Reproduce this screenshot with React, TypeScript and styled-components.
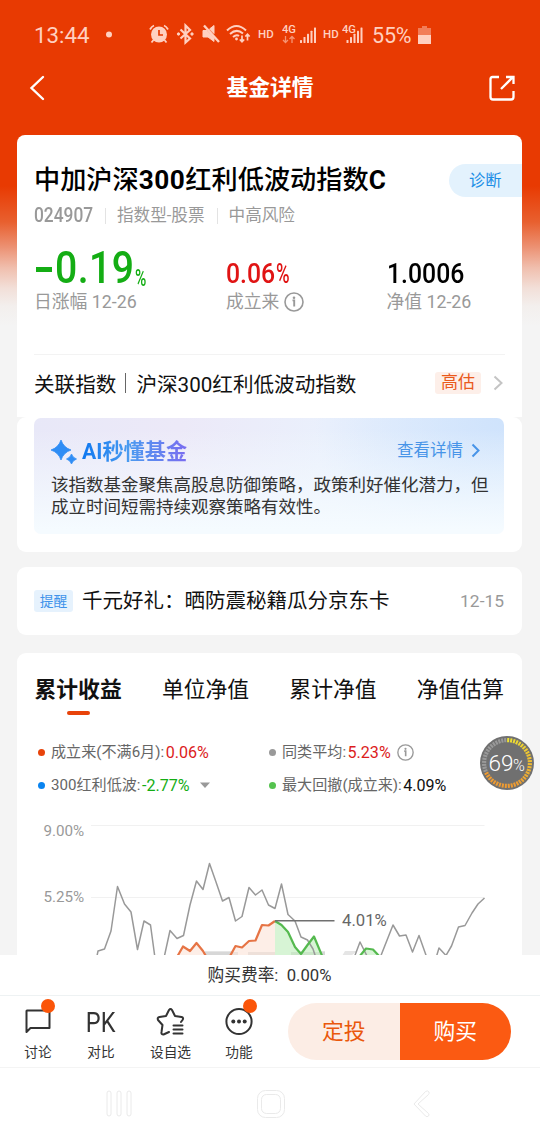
import React from "react";
import styled, { createGlobalStyle } from "styled-components";

const Global = createGlobalStyle`
  * { box-sizing: border-box; }
  body {
    margin: 0;
    background: #f4f4f4;
    font-family: Roboto, "Noto Sans CJK SC", sans-serif;
    color: #111;
  }
  svg { display: block; flex: none; }
`;

const Page = styled.div`
  position: relative;
  width: 540px;
  height: 1140px;
  overflow: hidden;
  display: flex;
  flex-direction: column;
  background: linear-gradient(#e83a02 0, #e83a02 186px, #e8602f 222px, #ec8f70 246px, #f0bfae 268px, #f2dfd8 288px, #f3efed 306px, #f4f4f4 326px);
`;

const StatusBar = styled.div`
  flex: none;
  display: flex;
  align-items: center;
  height: 70px;
  padding-left: 34px;
  color: #ffd0c0;
`;

const Clock = styled.span`
  width: 69px;
  font-size: 22.3px;
`;

const Battery = styled.span`
  width: 46px;
  font-size: 21.5px;
  letter-spacing: -0.2px;
  margin-left: 7px;
`;

const Hd = styled.span<{ $left: number }>`
  width: 16px;
  margin-left: ${(p) => p.$left}px;
  font-size: 11.5px;
  font-weight: 500;
  line-height: 14px;
  padding-bottom: 2px;
`;

const Spaced = styled.span<{ $left: number }>`
  margin-left: ${(p) => p.$left}px;
`;

const Header = styled.header`
  flex: none;
  display: flex;
  align-items: center;
  justify-content: space-between;
  height: 34px;
  padding: 1px 25px 0 29px;
`;

const HeaderTitle = styled.h1`
  margin: 0;
  padding: 1px 0 0 6px;
  font-size: 21.8px;
  line-height: 34px;
  font-weight: 700;
  color: #fff;
`;

const Content = styled.main`
  flex: 1;
  min-height: 0;
  overflow: hidden;
  padding: 31px 18px 0 17px;
`;

const Card = styled.section<{ $gap?: number }>`
  margin-top: ${(p) => p.$gap ?? 0}px;
  border-radius: 9px;
  background: #fff;
`;

const SummaryCard = styled(Card)`
  height: 282px;
  padding: 29px 17px 0;
  border-radius: 8px 8px 0 0;
`;

const TitleRow = styled.div`
  display: flex;
  align-items: center;
  justify-content: space-between;
  height: 33px;
  margin-right: -17px;
`;

const FundName = styled.h2`
  margin: 0;
  font-size: 26.2px;
  line-height: 33px;
  font-weight: 500;
  color: #000;
  white-space: nowrap;
  b { font-weight: 700; letter-spacing: 0.5px; }
`;

const Diagnose = styled.span`
  width: 73px;
  height: 33px;
  padding-left: 20px;
  border-radius: 17px 0 0 17px;
  background: #e3f2fd;
  color: #1c8ee6;
  font-size: 16.3px;
  line-height: 34px;
`;

const Meta = styled.div`
  display: flex;
  align-items: center;
  height: 24px;
  margin-top: 7px;
  font-size: 16.6px;
  line-height: 24px;
  color: #999;
`;

const MetaItem = styled.span`
  padding-left: 12px;
  margin-right: 12px;
  position: relative;
  line-height: 24px;
  &::before {
    content: "";
    position: absolute;
    left: 0;
    top: 4px;
    height: 16px;
    border-left: 1px solid #e3e3e3;
  }
`;

/* Condensed numerals: a fixed box with the digits squeezed horizontally */
const Din = styled.span<{ $size: number; $w: number; $x?: number; $weight?: number; $space?: number }>`
  display: block;
  width: ${(p) => p.$w}px;
  font-size: ${(p) => p.$size}px;
  line-height: 1;
  font-weight: ${(p) => p.$weight ?? 500};
  letter-spacing: ${(p) => p.$space ?? 0}px;
  white-space: nowrap;
  transform: scaleX(${(p) => p.$x ?? 0.885});
  transform-origin: left center;
`;

const Minus = styled.i`
  align-self: center;
  width: 16px;
  height: 5px;
  margin: 2px 3px 0 2px;
  background: currentColor;
`;

const Stats = styled.div`
  display: grid;
  grid-template-columns: 192px 160.5px 1fr;
  margin-top: 18px;
`;

const StatValue = styled.div<{ $color: string; $lift?: number }>`
  display: flex;
  align-items: flex-end;
  height: 44px;
  padding-bottom: ${(p) => p.$lift ?? 0}px;
  color: ${(p) => p.$color};
`;

const StatLabel = styled.div`
  display: flex;
  align-items: center;
  gap: 5px;
  height: 24px;
  font-size: 17.8px;
  line-height: 24px;
  color: #999;
`;

const Related = styled.div`
  display: flex;
  align-items: center;
  height: 56px;
  margin-top: 40px;
  border-top: 1px solid #f3f3f3;
  font-size: 20.6px;
  color: #111;
`;

const Bar = styled.i`
  width: 1px;
  height: 20px;
  margin: 0 10px 0 9px;
  background: #666;
`;

const Tag = styled.span<{ $tone: "orange" | "blue" }>`
  flex: none;
  width: ${(p) => (p.$tone === "orange" ? 46 : 39)}px;
  height: 22px;
  border-radius: 3px;
  text-align: center;
  line-height: ${(p) => (p.$tone === "orange" ? 21 : 22)}px;
  font-size: ${(p) => (p.$tone === "orange" ? 17 : 13.8)}px;
  color: ${(p) => (p.$tone === "orange" ? "#ea5a1c" : "#3f93ea")};
  background: ${(p) => (p.$tone === "orange" ? "#fdefe9" : "#e6f2fd")};
`;

const Push = styled.div`
  display: flex;
  align-items: center;
  margin-left: auto;
  margin-right: 2px;
  gap: 12px;
  padding-top: 1px;
`;

const AiCard = styled(Card)`
  height: 135px;
  padding: 1px 18px 0 17px;
`;

const AiPanel = styled.div`
  height: 116px;
  padding: 20px 12px 0 17px;
  border-radius: 7px;
  background:
    linear-gradient(to bottom, rgba(246, 252, 255, 0) 10%, #f5fbff 96%),
    radial-gradient(circle at 100% 0, #cfe3fc 0, rgba(220, 235, 253, 0) 190px),
    linear-gradient(100deg, #e8e8f8 0, #ece9f8 30%, #eaf0fc 60%, #e0edfd 100%);
`;

const AiHead = styled.div`
  display: flex;
  align-items: center;
  height: 26px;
`;

const AiTitle = styled.strong`
  margin-left: 5px;
  padding-top: 1px;
  font-size: 21.2px;
  line-height: 28px;
  font-weight: 700;
  background: linear-gradient(90deg, #0f78f0, #4b9bf0 45%, #7a6cf0);
  background-clip: text;
  -webkit-background-clip: text;
  color: transparent;
`;

const More = styled.span`
  display: flex;
  align-items: center;
  gap: 8px;
  margin: -1px 12px 0 auto;
  font-size: 16.5px;
  line-height: 24px;
  color: #4794e8;
`;

const AiText = styled.p`
  margin: 11px 0 0;
  width: 442px;
  font-size: 17.5px;
  line-height: 21.5px;
  color: #333;
`;

const Notice = styled(Card)`
  display: flex;
  align-items: center;
  height: 68px;
  padding: 0 18px 0 17px;
`;

const NoticeText = styled.span`
  margin-left: 9px;
  font-size: 20.5px;
  line-height: 30px;
`;

const NoticeDate = styled.span`
  margin-left: auto;
  font-size: 17.4px;
  color: #999;
`;

const ChartCard = styled(Card)`
  height: 400px;
`;

const Tabs = styled.div`
  display: flex;
  justify-content: space-between;
  padding: 21px 18px 0 17.5px;
`;

const Tab = styled.span<{ $active?: boolean }>`
  height: 43px;
  font-size: 21.8px;
  line-height: 31px;
  font-weight: ${(p) => (p.$active ? 700 : 400)};
  color: #111;
  &::after {
    content: "";
    display: ${(p) => (p.$active ? "block" : "none")};
    width: 23px;
    height: 4px;
    margin: 6px auto 0;
    border-radius: 2px;
    background: #e8430a;
  }
`;

const Legend = styled.div`
  display: grid;
  grid-template-columns: 231px 1fr;
  grid-auto-rows: 33px;
  height: 85px;
  padding: 19px 0 0 20px;
`;

const LegendItem = styled.div<{ $dot: string }>`
  display: flex;
  align-items: center;
  font-size: 15.1px;
  line-height: 33px;
  color: #666;
  &::before {
    content: "";
    width: 7px;
    height: 7px;
    margin: 0 6px 1px 1px;
    border-radius: 50%;
    background: ${(p) => p.$dot};
  }
`;

const LegendValue = styled.span<{ $color: string }>`
  margin: 0 6px 0 1.5px;
  font-size: 16.1px;
  color: ${(p) => p.$color};
`;

const Dock = styled.footer`
  flex: none;
  height: 185px;
  background: #fff;
`;

const Fee = styled.div`
  height: 41px;
  border-bottom: 1px solid #eef2f3;
  padding-right: 1px;
  text-align: center;
  font-size: 16.7px;
  line-height: 41px;
  color: #333;
`;

const Actions = styled.div`
  display: flex;
  height: 72px;
  padding: 7px 0 0 3px;
  border-bottom: 1px solid #f4f4f4;
`;

const Action = styled.div<{ $w: number }>`
  position: relative;
  width: ${(p) => p.$w}px;
  display: flex;
  flex-direction: column;
  align-items: center;
  font-size: 13.7px;
  line-height: 20px;
  color: #333;
  svg, b { margin-top: 3px; margin-bottom: 5px; }
`;

const Pk = styled.b`
  height: 31px;
  font-size: 28px;
  line-height: 33px;
  font-weight: 400;
  transform: scaleX(0.84);
`;

const Badge = styled.i<{ $left: number }>`
  position: absolute;
  top: -4px;
  left: ${(p) => p.$left}px;
  width: 14px;
  height: 14px;
  border-radius: 50%;
  background: #fb5509;
`;

const Trade = styled.div`
  display: flex;
  width: 223px;
  height: 57px;
  margin-left: 22px;
  border-radius: 29px;
  overflow: hidden;
`;

const TradeButton = styled.button<{ $primary?: boolean }>`
  flex: 1;
  border: 0;
  padding: 0;
  font: inherit;
  font-size: 21.8px;
  line-height: 57px;
  color: ${(p) => (p.$primary ? "#fff" : "#ea580c")};
  background: ${(p) => (p.$primary ? "#fb5a12" : "#fcede5")};
`;

const SystemNav = styled.div`
  display: flex;
  align-items: center;
  justify-content: space-between;
  height: 72px;
  padding: 0 110px 0 106px;
  svg:nth-child(2) { margin-right: 4px; }
`;

const Float = styled.div`
  position: absolute;
  left: 480px;
  top: 736px;
`;

const Info = ({ size, color = "#999" }: { size: number; color?: string }) => (
  <svg width={size} height={size} viewBox="0 0 20 20" fill="none" stroke={color}>
    <circle cx="10" cy="10" r="9" strokeWidth="1.6" />
    <path d="M8.5 8.4H10.2V14.4" strokeWidth="1.9" />
    <circle cx="10" cy="5.7" r="1.3" fill={color} stroke="none" />
  </svg>
);

const Chevron = ({ color, w = 8, h = 14 }: { color: string; w?: number; h?: number }) => (
  <svg width={w + 2} height={h + 2} viewBox={`-1 -1 ${w + 2} ${h + 2}`} fill="none" stroke={color} strokeWidth="2">
    <path d={`M0.5 0.5L${w - 0.5} ${h / 2}L0.5 ${h - 0.5}`} />
  </svg>
);

const Network = ({ arrows }: { arrows?: boolean }) => (
  <svg width={arrows ? 36 : 23} height="28" viewBox={`0 -3 ${arrows ? 36 : 23} 28`} fill="currentColor">
    <text x="0" y="9" fontSize="11.5" fontWeight="500" textLength="14" lengthAdjust="spacingAndGlyphs">4G</text>
    {arrows && (
      <g fill="none" stroke="currentColor" strokeWidth="1.3" opacity="0.6">
        <path d="M3.5 12V18.5M1 16L3.5 18.5L6 16M10 19V12.5M7.5 15L10 12.5L12.5 15" />
      </g>
    )}
    {[0, 1, 2, 3, 4].map((i) => (
      <rect key={i} x={(arrows ? 18 : 4.5) + i * 3.5} y={16 - i * 3.1} width="2" height={3 + i * 3.1} rx="0.5" />
    ))}
  </svg>
);

const StatusIcons = () => (
  <svg width="102" height="24" fill="none" stroke="currentColor">
    <g transform="translate(0 0.5)">
      <circle cx="10" cy="11" r="8" fill="currentColor" stroke="none" />
      <path d="M1 6Q2.5 3 5 2M15 2Q17.5 3 19 6M4.5 16.5L2.5 19M15.5 16.5L17.5 19" strokeWidth="1.8" />
      <path d="M10 6.5V11.5H14" stroke="#e83a02" strokeWidth="1.7" />
    </g>
    <g transform="translate(27 0.5)">
      <path d="M4.5 6L14 15L9.5 19V2L14 6.5L4.5 15" strokeWidth="2.2" />
      <circle cx="2.5" cy="10.5" r="1.2" fill="currentColor" />
      <circle cx="16" cy="10.5" r="1.2" fill="currentColor" />
    </g>
    <g transform="translate(53 0.5)">
      <path d="M1 7H5L12 14V18L6 13.5H1ZM7.5 5.5L12 2V10Z" fill="currentColor" stroke="currentColor" strokeWidth="1" />
      <path d="M2 2L17 18.5" strokeWidth="2.4" />
    </g>
    <g transform="translate(77 0.5)" strokeWidth="2">
      <path d="M1 7Q10.5 -2 20 7M4 10.5Q10.5 4.5 17 10M7 13.5Q10.5 10.5 13 12.5" />
      <circle cx="10.5" cy="15.5" r="1.4" fill="currentColor" stroke="none" />
      <path d="M16 12V18M13.8 16L16 18.2L18.2 16M21.5 17V11M19.3 13L21.5 10.8L23.7 13" strokeWidth="1.7" />
    </g>
  </svg>
);

const average1 = "97,146 98,141 104.5,139 111,121 117.5,76.5 124.5,94 131,102 137.5,139.5 144,111 150.5,115 155,148";
const average2 =
  "164,148 170,120.5 177,128.5 183.5,125.5 190,95 196.5,71 203,79.5 209.5,53.5 216,72 222.5,91 229,87.5 235.5,111 242,106.5 249,77.5 255.5,85 262,80 268.5,95 275,98.5 281.5,74 288,104.5 295,111 301,127 307.5,130 313,139 316,148";
const average3a = "354,148 360,132 368,148";
const average3b = "380,148 393,115 399.5,126 406,125 412.5,142 419,125.5 427,148";
const average3c = "436,148 439,138 446,145.5 451.5,136 458.5,117 465,115.5 472,103 478,94 484.5,88";

const Chart = () => (
  <svg width="505" height="153" viewBox="17 802 505 153">
    <g transform="translate(0 810)" fill="none" strokeLinejoin="round">
      <path d="M91 15.5H484.5M91 87.5H484.5" stroke="#f1f1f1" />
      <g fill="#999" fontSize="15.2">
        <text x="43.5" y="26.3">9.00%</text>
        <text x="43.5" y="92">5.25%</text>
      </g>
      <path d="M205 141H238V145H205ZM248 141H285V145H248ZM291 141H325V146H291ZM345 141H357L351 146H342Z" fill="#e5e5e5" />
      <path d="M177 146L183 136.5L190 141L196.5 133L203 141L206 146ZM230 146L235.5 136L242 137.5L249 131L255.5 130.5L262 115L268.5 115.5L275 111V146Z" fill="#fdeee7" />
      <path d="M275 111L281.5 115L288 122L295 137L301 144L307.5 135L314 126.5L322 146H275ZM360 146L366 139L373 140L379 146Z" fill="#d7f4d5" />
      <path d="M238 142H205V145H238ZM248 142H275V145H248ZM291 142H325V145H291Z" fill="#000" opacity="0.06" />
      <g stroke="#999" strokeWidth="1.5">
        <polyline points={average1} />
        <polyline points={average2} />
        <polyline points={average3a} />
        <polyline points={average3b} />
        <polyline points={average3c} />
      </g>
      <g strokeWidth="2.2">
        <path d="M177 147L183 136.5L190 141L196.5 133L203 141L207 148M229 148L235.5 136L242 137.5L249 131L255.5 130.5L262 115L268.5 115.5L275 111" stroke="#e67445" />
        <path d="M275 111L281.5 115L288 122L295 137L301 144L307.5 135L314 126.5L323 148M359 147L366 138.5L373 139.5L380 147" stroke="#55b94f" />
      </g>
      <path d="M275 110.8H334.5" stroke="#707070" strokeWidth="1.6" />
      <text x="342" y="116" fill="#666" fontSize="16.7">4.01%</text>
    </g>
  </svg>
);

const Gauge = () => (
  <svg width="54" height="54" viewBox="-27 -27 54 54">
    <circle r="27" fill="#707070" />
    {Array.from({ length: 48 }, (_, i) => {
      const lit = i < 33;
      const green = Math.max(155, 226 - i * 3.4);
      return (
        <path key={i} d="M0 -25V-20.8" transform={`rotate(${i * 7.5 + 3})`} stroke={lit ? `rgb(238,${green},50)` : "#999"} strokeWidth="2" />
      );
    })}
    <text x="-18.5" y="8" fill="#fff" fontFamily="Roboto" fontWeight="300" fontSize="22.5">
      69<tspan fontSize="16" dx="-0.5">%</tspan>
    </text>
  </svg>
);

export default function App() {
  return (
    <>
      <Global />
      <Page>
        <StatusBar>
          <Clock>13:44</Clock>
          <svg width="12" height="8"><circle cx="6" cy="3.5" r="3" fill="currentColor" /></svg>
          <Spaced $left={34}><StatusIcons /></Spaced>
          <Hd $left={7}>HD</Hd>
          <Spaced $left={8}><Network arrows /></Spaced>
          <Hd $left={5}>HD</Hd>
          <Spaced $left={3}><Network /></Spaced>
          <Battery>55%</Battery>
          <svg width="13" height="18" fill="currentColor">
            <path d="M4 0H9V2H13V9H0V2H4Z" opacity="0.45" />
            <path d="M0 9H13V18H0Z" />
          </svg>
        </StatusBar>
        <Header>
          <svg width="16" height="26" fill="none" stroke="#fff" strokeWidth="2.4" strokeLinecap="round">
            <path d="M14 2L2.5 13L14 24" />
          </svg>
          <HeaderTitle>基金详情</HeaderTitle>
          <svg width="26" height="26" fill="none" stroke="#fff" strokeWidth="2.3">
            <path d="M10 2H3.5Q1.5 2 1.5 4V22Q1.5 24.5 4 24.5H22Q24.5 24.5 24.5 22V16M12 14L23.5 2.5M17 2H24.5V9" />
          </svg>
        </Header>
        <Content>
          <SummaryCard>
            <TitleRow>
              <FundName>中加沪深<b>300</b>红利低波动指数<b>C</b></FundName>
              <Diagnose>诊断</Diagnose>
            </TitleRow>
            <Meta>
              <Din $size={19.3} $w={71} $x={0.9} $weight={500}>024907</Din>
              <MetaItem>指数型-股票</MetaItem>
              <MetaItem>中高风险</MetaItem>
            </Meta>
            <Stats>
              <div>
                <StatValue $color="#14ad14">
                  <Minus />
                  <Din $size={45} $w={80} $x={0.87} $space={0.5}>0.19</Din>
                  <Din $size={24} $w={12} $x={0.64}>%</Din>
                </StatValue>
                <StatLabel>日涨幅 12-26</StatLabel>
              </div>
              <div>
                <StatValue $color="#e01414" $lift={2}>
                  <Din $size={28} $w={50}>0.06</Din>
                  <Din $size={28} $w={14} $x={0.66}>%</Din>
                </StatValue>
                <StatLabel>成立来<Info size={20} /></StatLabel>
              </div>
              <div>
                <StatValue $color="#000" $lift={2}>
                  <Din $size={28} $w={80}>1.0006</Din>
                </StatValue>
                <StatLabel>净值 12-26</StatLabel>
              </div>
            </Stats>
            <Related>
              关联指数<Bar />沪深300红利低波动指数
              <Push>
                <Tag $tone="orange">高估</Tag>
                <Chevron color="#c4c4c4" />
              </Push>
            </Related>
          </SummaryCard>
          <AiCard>
            <AiPanel>
              <AiHead>
                <svg width="26" height="26" fill="#2f8df5">
                  <path d="M10 2Q12.5 9.5 20 12Q12.5 14.5 10 22Q7.5 14.5 0 12Q7.5 9.5 10 2ZM20.5 16Q21.5 19.5 25.5 21Q21.5 22.500 20.5 26Q19.5 22.5 15.5 21Q19.5 19.5 20.5 16Z" stroke="#2f8df5" strokeWidth="0.8" />
                </svg>
                <AiTitle>AI秒懂基金</AiTitle>
                <More>查看详情<Chevron color="#4794e8" w={7} h={13} /></More>
              </AiHead>
              <AiText>该指数基金聚焦高股息防御策略，政策利好催化潜力，但成立时间短需持续观察策略有效性。</AiText>
            </AiPanel>
          </AiCard>
          <Notice $gap={15}>
            <Tag $tone="blue">提醒</Tag>
            <NoticeText>千元好礼：晒防震秘籍瓜分京东卡</NoticeText>
            <NoticeDate>12-15</NoticeDate>
          </Notice>
          <ChartCard $gap={18}>
            <Tabs>
              <Tab $active>累计收益</Tab>
              <Tab>单位净值</Tab>
              <Tab>累计净值</Tab>
              <Tab>净值估算</Tab>
            </Tabs>
            <Legend>
              <LegendItem $dot="#e8430a">成立来(不满6月):<LegendValue $color="#dc1c1c">0.06%</LegendValue></LegendItem>
              <LegendItem $dot="#999">同类平均:<LegendValue $color="#dc1c1c">5.23%</LegendValue><Info size={17} /></LegendItem>
              <LegendItem $dot="#0a84f0">
                300红利低波:<LegendValue $color="#14ad14">-2.77%</LegendValue>
                <Spaced $left={2}><svg width="14" height="7"><path d="M2 0.5H12L7 6Z" fill="#999" /></svg></Spaced>
              </LegendItem>
              <LegendItem $dot="#55c34f">最大回撤(成立来):<LegendValue $color="#111">4.09%</LegendValue></LegendItem>
            </Legend>
            <Chart />
          </ChartCard>
        </Content>
        <Dock>
          <Fee>购买费率:&nbsp; 0.00%</Fee>
          <Actions>
            <Action $w={70}>
              <svg width="28" height="31" fill="none" stroke="#333" strokeWidth="2" strokeLinejoin="round">
                <path d="M3 4.5H25.5V22H6.5L2.5 26V5Z" />
              </svg>
              讨论
              <Badge $left={38} />
            </Action>
            <Action $w={56}><Pk>PK</Pk>对比</Action>
            <Action $w={83}>
              <svg width="30" height="31" fill="none" stroke="#333" strokeWidth="2" strokeLinejoin="round" strokeLinecap="round">
                <path d="M13 26L7.5 28.5Q5 28.5 5.5 26L6.5 19L2 14Q1 11.5 3.5 11L10 10L13 4Q14.5 2 16 4L19 10L25.5 11Q28 11.500 26.5 14L25 16M17.500 19.5H26.5M17.5 23.5H26.5M17.5 27.5H26.5" />
              </svg>
              设自选
            </Action>
            <Action $w={54}>
              <svg width="28" height="31" fill="#333">
                <circle cx="14" cy="15.5" r="12.6" fill="none" stroke="#333" strokeWidth="2" />
                <circle cx="8.3" cy="15.5" r="2" /><circle cx="14" cy="15.5" r="2" /><circle cx="19.7" cy="15.5" r="2" />
              </svg>
              功能
              <Badge $left={31} />
            </Action>
            <Trade>
              <TradeButton>定投</TradeButton>
              <TradeButton $primary>购买</TradeButton>
            </Trade>
          </Actions>
          <SystemNav>
            <svg width="27" height="28" fill="none" stroke="#eaeaea">
              <rect x="1" y="1" width="4" height="25" rx="2" /><rect x="11" y="1" width="4" height="25" rx="2" /><rect x="21" y="1" width="4" height="25" rx="2" />
            </svg>
            <svg width="28" height="28" fill="none" stroke="#eaeaea">
              <rect x="0.5" y="0.5" width="27" height="27" rx="8" /><rect x="4.5" y="4.5" width="19" height="19" rx="5" />
            </svg>
            <svg width="17" height="28" fill="none" stroke="#eaeaea">
              <path d="M12.5 1.5Q14.5 0 16 2Q16.5 3.5 15.5 4.5L5 14L15.5 23.5Q16.5 25 15.5 26Q14 27.5 12.5 26L1 14Z" />
            </svg>
          </SystemNav>
        </Dock>
        <Float><Gauge /></Float>
      </Page>
    </>
  );
}
